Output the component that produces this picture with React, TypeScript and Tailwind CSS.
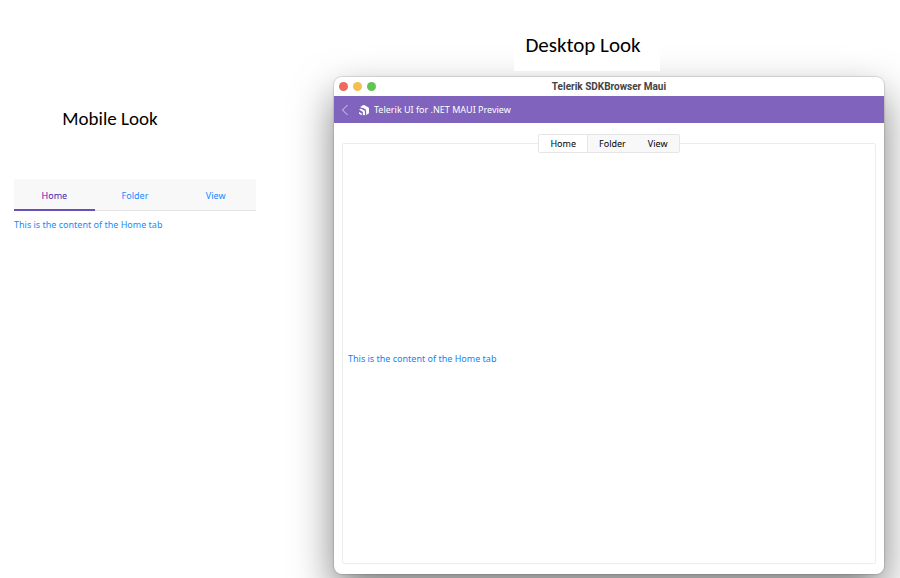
import { useState } from "react";

const TABS = ["Home", "Folder", "View"] as const;
type Tab = (typeof TABS)[number];

interface TabsProps {
  selected: Tab;
  onSelect: (tab: Tab) => void;
}

function MobileTabs({ selected, onSelect }: TabsProps) {
  return (
    <div role="tablist" aria-label="Mobile tabs" className="flex h-8 border-b border-[#e4e4e4] bg-[#f8f8f8]">
      {TABS.map((tab) => (
        <button
          key={tab}
          type="button"
          role="tab"
          aria-selected={tab === selected}
          onClick={() => onSelect(tab)}
          className={
            tab === selected
              ? "-mb-px flex-1 border-b-2 border-[#6750b8] pt-1 text-[#4a22b0]"
              : "-mb-px flex-1 border-b-2 border-transparent pt-1 text-[#1a88ff]"
          }
        >
          {tab}
        </button>
      ))}
    </div>
  );
}

function SegmentedTabs({ selected, onSelect }: TabsProps) {
  return (
    <div
      role="tablist"
      aria-label="Desktop tabs"
      className="z-10 flex h-[19px] overflow-hidden rounded-xs border border-[#e6e6e6] bg-[#f8f8f8] text-black"
    >
      {TABS.map((tab) => (
        <button
          key={tab}
          type="button"
          role="tab"
          aria-selected={tab === selected}
          onClick={() => onSelect(tab)}
          className={tab === selected ? "border-r border-[#e6e6e6] bg-white px-[11px]" : "px-[11px]"}
        >
          {tab}
        </button>
      ))}
    </div>
  );
}

function TelerikLogo() {
  return (
    <svg viewBox="0 0 12 12" className="size-3" fill="#ffffff" aria-hidden="true">
      <path d="M2.2 2.9 5 1.2Q5.8.8 6.6 1.2L10.2 3.3Q11 3.8 11 4.6V8.6Q11 9.3 10.4 9.7L8.1 11V6.5Q8.1 5.7 7.4 5.3L5.2 4Q4.6 3.7 4 3.9z" />
      <path d="M1 5.4 2.6 4.7Q3.1 4.6 3.6 4.9L6.3 6.5Q6.9 6.9 6.9 7.6V11.3L4.9 11.1V8.5Q4.9 7.8 4.3 7.4z" />
      <path d="M1 7.9 3.8 9.5V11.2L1.5 10.1Q1 9.8 1 9.2z" />
    </svg>
  );
}

function DesktopWindow({ selected, onSelect }: TabsProps) {
  return (
    <section className="flex flex-1 flex-col rounded-lg bg-white shadow-[0_0_1px_1px_rgba(0,0,0,0.12),0_18px_40px_rgba(0,0,0,0.5)]">
      <div className="grid h-[19px] grid-cols-[1fr_auto_1fr] items-center px-[5px]">
        <div className="flex gap-[5px]">
          <span className="size-[9px] rounded-full bg-[#ed6a5e]" />
          <span className="size-[9px] rounded-full bg-[#f4bf4f]" />
          <span className="size-[9px] rounded-full bg-[#61c554]" />
        </div>
        <h2 className="font-[Roboto,sans-serif] text-[10px] font-bold text-[#444444]">Telerik SDKBrowser Maui</h2>
      </div>
      <header className="flex h-[27px] items-center bg-[#8063bd] pl-[7px] text-white">
        <button type="button" aria-label="Back">
          <svg viewBox="0 0 8 12" className="h-3 w-2" fill="none" stroke="#d9cff0" aria-hidden="true">
            <path d="M6.5 1 1.5 6l5 5" />
          </svg>
        </button>
        <div className="flex items-center gap-1 pl-[9px]">
          <TelerikLogo />
          <span>Telerik UI for .NET MAUI Preview</span>
        </div>
      </header>
      <div className="flex flex-1 flex-col items-center px-2 pt-[11px] pb-2.5">
        <SegmentedTabs selected={selected} onSelect={onSelect} />
        <div
          role="tabpanel"
          className="-mt-2.5 flex w-full flex-1 items-center rounded-xs border border-[#ededed] px-[5px] pt-2.5 text-[#2080f5]"
        >
          This is the content of the {selected} tab
        </div>
      </div>
    </section>
  );
}

export default function App() {
  const [mobileTab, setMobileTab] = useState<Tab>("Home");
  const [desktopTab, setDesktopTab] = useState<Tab>("Home");

  return (
    <main className="flex h-screen overflow-hidden bg-white pr-4 pl-3.5 font-['Noto_Sans',sans-serif] text-[9px] leading-3">
      <div className="w-[242px] shrink-0">
        <h1 className="pt-[107px] pr-[50px] text-center font-[Carlito,Lato,sans-serif] text-[19px] leading-6 text-black">
          Mobile Look
        </h1>
        <div className="pt-12">
          <MobileTabs selected={mobileTab} onSelect={setMobileTab} />
          <p className="pt-2 text-[#1a88ff]">This is the content of the {mobileTab} tab</p>
        </div>
      </div>
      <div className="ml-[78px] flex flex-1 flex-col pb-1">
        <h1 className="z-10 ml-[180px] w-[146px] bg-white pt-[33px] pr-2 pb-3.5 text-center font-[Carlito,Lato,sans-serif] text-[21px] leading-6 text-black">
          Desktop Look
        </h1>
        <div className="flex flex-1 flex-col pt-1.5">
          <DesktopWindow selected={desktopTab} onSelect={setDesktopTab} />
        </div>
      </div>
    </main>
  );
}
